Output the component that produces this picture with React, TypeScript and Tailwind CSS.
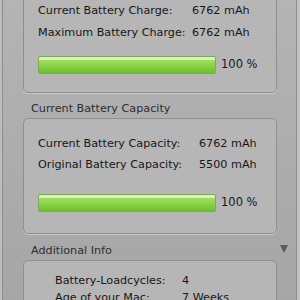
import React from "react";

const font = { fontFamily: '"DejaVu Sans", "Liberation Sans", sans-serif' };

function Row({ label, value, labelW, h }: { label: string; value: string; labelW: string; h: string }) {
  return (
    <div className={`flex shrink-0 items-center whitespace-nowrap text-[11.2px] text-[#161616] ${h}`}>
      <span className={`shrink-0 ${labelW}`}>{label}</span>
      <span>{value}</span>
    </div>
  );
}

function Bar() {
  return (
    <div className="flex items-center">
      <div className="h-[18px] w-[178px] rounded-[2px] border border-[#7fa85c] bg-gradient-to-b from-[#a9e070] via-[#8fd64a] to-[#6bbf2c] shadow-[inset_0_3px_0_rgba(235,255,210,0.7)]" />
      <span className="ml-[5px] text-[11.5px] text-[#161616]">100 %</span>
    </div>
  );
}

export default function App() {
  return (
    <div
      className="flex h-[300px] w-[300px] overflow-hidden bg-gradient-to-b from-[#b4b4b4] to-[#a6a6a6]"
      style={font}
    >
      {/* left edge of neighbouring window */}
      <div className="w-[3px] border-r border-[#8e8e8e] bg-[#bdbdbd]" />

      {/* main panel */}
      <div className="flex flex-1 flex-col pl-[20px] pr-[19px]">
        {/* Battery charge box (top cut off) */}
        <div className="-mt-[20px] shrink-0 rounded-[5px] border border-[#8f8f8f] bg-[#b6b6b6] pb-[18px] pl-[14px] pt-[19px] shadow-[0_1px_0_rgba(255,255,255,0.35)]">
          <Row label="Current Battery Charge:" value="6762 mAh" labelW="w-[154px]" h="h-[22px]" />
          <Row label="Maximum Battery Charge:" value="6762 mAh" labelW="w-[154px]" h="h-[22px]" />
          <div className="mt-[12px]">
            <Bar />
          </div>
        </div>

        {/* Current Battery Capacity */}
        <div className="flex h-[25px] shrink-0 items-end pl-[8px] text-[11.2px] text-[#2e2e2e]">
          Current Battery Capacity
        </div>
        <div className="shrink-0 rounded-[5px] border border-[#8f8f8f] bg-[#b6b6b6] pb-[21px] pl-[14px] pt-[15px] shadow-[0_1px_0_rgba(255,255,255,0.35)]">
          <Row label="Current Battery Capacity:" value="6762 mAh" labelW="w-[161px]" h="h-[21px]" />
          <Row label="Original Battery Capacity:" value="5500 mAh" labelW="w-[161px]" h="h-[21px]" />
          <div className="mt-[18px]">
            <Bar />
          </div>
        </div>

        {/* Additional Info */}
        <div className="flex h-[26px] shrink-0 items-end pl-[8px] text-[11.2px] text-[#2e2e2e]">
          <span className="flex-1">Additional Info</span>
          <svg width="8" height="8" viewBox="0 0 8 8" className="mb-[7px] mr-[-11px]">
            <path d="M0 0 H8 L4 8 Z" fill="#5a5a5a" />
          </svg>
        </div>
        <div className="h-[60px] shrink-0 rounded-t-[5px] border border-b-0 border-[#8f8f8f] bg-[#b6b6b6] pl-[31px] pt-[12px]">
          <Row label="Battery-Loadcycles:" value="4" labelW="w-[127px]" h="h-[17px]" />
          <Row label="Age of your Mac:" value="7 Weeks" labelW="w-[127px]" h="h-[17px]" />
        </div>
      </div>

      {/* right edge of neighbouring window */}
      <div className="w-[4px] border-l border-[#8e8e8e] bg-[#c2c2c2]" />
    </div>
  );
}
